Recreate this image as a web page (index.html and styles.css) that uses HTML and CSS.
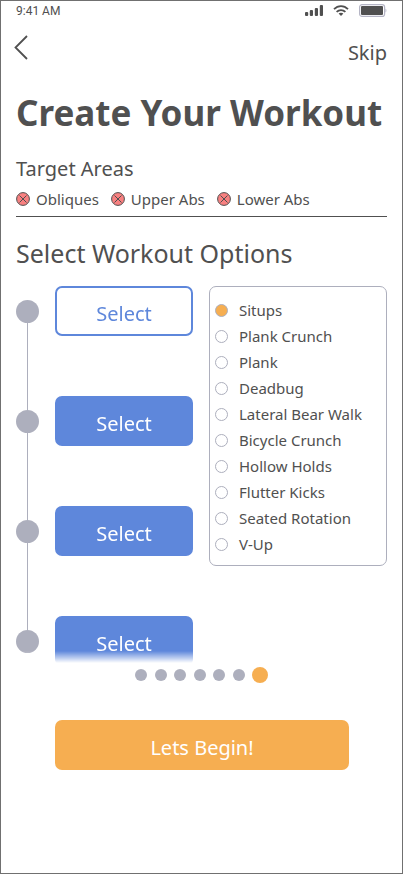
FILE: index.html
```html
<!DOCTYPE html>
<html lang="en">
<head>
    <meta charset="UTF-8">
    <meta name="viewport" content="width=device-width, initial-scale=1">
    <title>Create Your Workout</title>
    <link rel="stylesheet" href="styles.css">
</head>
<body>
    <div class="screen">
        <!-- Status bar -->
        <div class="status-bar">
            <span>9:41 AM</span>
            <div class="status-icons">
                <svg width="18" height="12" viewBox="0 0 18 12" fill="#505050">
                    <rect x="0" y="7" width="3.2" height="4" rx="1"/>
                    <rect x="4.8" y="5" width="3.2" height="6" rx="1"/>
                    <rect x="9.8" y="3" width="3.2" height="8" rx="1"/>
                    <rect x="14.8" y="0" width="3.2" height="11" rx="1"/>
                </svg>
                <svg width="16" height="12" viewBox="0 0 16 12" fill="none" stroke="#505050" stroke-width="1.8">
                    <path d="M1 4.2C5 .1 11 .1 15 4.2"/>
                    <path d="M3.6 6.9c2.5-2.4 6.3-2.4 8.8 0"/>
                    <path d="M5.6 8.6c1.4-1.2 3.4-1.2 4.8 0L8 11z" fill="#505050" stroke="none"/>
                </svg>
                <svg width="28" height="13" viewBox="0 0 28 13">
                    <rect x=".6" y=".6" width="25" height="11.8" rx="2.5" fill="none" stroke="#b5b5c5" stroke-width="1.2"/>
                    <rect x="2" y="2" width="22" height="9" rx="1" fill="#505050"/>
                    <path d="M26.5 4.5c1.2.4 1.2 3.6 0 4z" fill="#b5b5c5"/>
                </svg>
            </div>
        </div>

        <div class="top-nav">
            <button type="button" class="back" aria-label="Back">
                <svg width="14" height="25" viewBox="0 0 14 25" fill="none" stroke="#505050" stroke-width="1.8">
                    <path d="M13 1L1.5 12.5 13 24"/>
                </svg>
            </button>
            <a href="#" class="skip">Skip</a>
        </div>

        <h1>Create Your Workout</h1>

        <!-- Target areas -->
        <section class="areas">
            <h2>Target Areas</h2>
            <ul class="area-list">
                <li>
                    <button type="button" class="remove" aria-label="Remove Obliques">
                        <svg viewBox="0 0 14 14"><circle cx="7" cy="7" r="6.4"/><path d="M3.5 3.5l7 7M10.5 3.5l-7 7"/></svg>
                    </button>
                    Obliques
                </li>
                <li>
                    <button type="button" class="remove" aria-label="Remove Upper Abs">
                        <svg viewBox="0 0 14 14"><circle cx="7" cy="7" r="6.4"/><path d="M3.5 3.5l7 7M10.5 3.5l-7 7"/></svg>
                    </button>
                    Upper Abs
                </li>
                <li>
                    <button type="button" class="remove" aria-label="Remove Lower Abs">
                        <svg viewBox="0 0 14 14"><circle cx="7" cy="7" r="6.4"/><path d="M3.5 3.5l7 7M10.5 3.5l-7 7"/></svg>
                    </button>
                    Lower Abs
                </li>
            </ul>
        </section>

        <h2 class="options-title">Select Workout Options</h2>

        <div class="options">
            <div class="steps-view">
                <ol class="steps">
                    <li><span class="dot"></span><button type="button" class="select active">Select</button></li>
                    <li><span class="dot"></span><button type="button" class="select">Select</button></li>
                    <li><span class="dot"></span><button type="button" class="select">Select</button></li>
                    <li><span class="dot"></span><button type="button" class="select">Select</button></li>
                </ol>
            </div>

            <form class="exercises">
                <label><input type="radio" name="exercise" checked>Situps</label>
                <label><input type="radio" name="exercise">Plank Crunch</label>
                <label><input type="radio" name="exercise">Plank</label>
                <label><input type="radio" name="exercise">Deadbug</label>
                <label><input type="radio" name="exercise">Lateral Bear Walk</label>
                <label><input type="radio" name="exercise">Bicycle Crunch</label>
                <label><input type="radio" name="exercise">Hollow Holds</label>
                <label><input type="radio" name="exercise">Flutter Kicks</label>
                <label><input type="radio" name="exercise">Seated Rotation</label>
                <label><input type="radio" name="exercise">V-Up</label>
            </form>
        </div>

        <!-- Page indicator -->
        <div class="pager">
            <span></span><span></span><span></span><span></span><span></span><span></span><span class="current"></span>
        </div>

        <button type="button" class="begin">Lets Begin!</button>
    </div>
</body>
</html>
```
FILE: styles.css
```css
* {
    box-sizing: border-box;
}

body {
    margin: 0;
    background-color: #fff;
    color: #505050;
    font-family: "Noto Sans", "Open Sans", sans-serif;
}

h1, h2, ul, ol {
    margin: 0;
    padding: 0;
    font-weight: 400;
}

ul, ol {
    list-style: none;
}

button {
    font-family: inherit;
    border: none;
    padding: 0;
    background: none;
    cursor: pointer;
}

svg {
    display: block;
}

.screen {
    min-height: 100vh;
    padding: 0 15px;
    border: 1px solid #707070;
}

/* Status bar */
.status-bar {
    display: flex;
    justify-content: space-between;
    align-items: center;
    height: 19px;
    font-family: Roboto, sans-serif;
    font-size: 12px;
}

.status-icons {
    display: flex;
    align-items: center;
    gap: 10px;
}

.top-nav {
    display: flex;
    justify-content: space-between;
    align-items: flex-start;
    margin-left: -2px;
    padding-top: 15px;
}

.skip {
    margin-top: 4px;
    color: #505050;
    font-size: 20px;
    line-height: 28px;
    text-decoration: none;
}

h1 {
    margin-top: 21px;
    font-size: 35px;
    font-weight: 700;
    line-height: 50px;
    white-space: nowrap;
}

/* Target areas */
.areas {
    margin-top: 17px;
    padding-bottom: 6px;
    border-bottom: 1px solid #505050;
}

.areas h2 {
    font-size: 20px;
    line-height: 28px;
}

.area-list {
    display: flex;
    gap: 12px;
    margin-top: 5px;
}

.area-list li {
    display: flex;
    align-items: center;
    gap: 6px;
    font-size: 15px;
    line-height: 22px;
}

.remove svg {
    width: 14px;
    height: 14px;
    fill: #f88080;
    stroke: #505050;
}

.options-title {
    margin-top: 18px;
    font-size: 25px;
    line-height: 36px;
}

/* Steps and exercise list */
.options {
    display: flex;
    align-items: flex-start;
    justify-content: space-between;
    gap: 16px;
    margin-top: 15px;
}

.steps-view {
    flex: 1;
    height: 377px;
    overflow: hidden;
    -webkit-mask-image: linear-gradient(to top, transparent, #000 12px);
    mask-image: linear-gradient(to top, transparent, #000 12px);
}

.steps {
    display: flex;
    flex-direction: column;
    gap: 60px;
    background: linear-gradient(#adafbd, #adafbd) 11px 25px / 1px 330px no-repeat;
}

.steps li {
    display: flex;
    align-items: center;
    gap: 16px;
}

.dot {
    width: 23px;
    height: 23px;
    border-radius: 50%;
    background-color: #adafbd;
}

.select {
    flex: 1;
    height: 50px;
    padding-top: 4px;
    border: 2px solid #5e87db;
    border-radius: 7px;
    background-color: #5e87db;
    color: #fff;
    font-size: 20px;
}

.select.active {
    background-color: #fff;
    color: #5e87db;
}

.exercises {
    width: 178px;
    padding: 10px 5px 8px;
    border: 1px solid #adafbd;
    border-radius: 7px;
}

.exercises label {
    display: flex;
    align-items: center;
    gap: 11px;
    height: 26px;
    font-size: 15px;
}

.exercises input {
    appearance: none;
    width: 13px;
    height: 13px;
    margin: 0;
    border: 1px solid #adafbd;
    border-radius: 50%;
}

.exercises input:checked {
    background-color: #f6ae51;
}

.pager {
    display: flex;
    align-items: center;
    justify-content: space-between;
    width: 133px;
    margin: 4px auto 0;
}

.pager span {
    width: 12px;
    height: 12px;
    border-radius: 50%;
    background-color: #adafbd;
}

.pager .current {
    width: 16px;
    height: 16px;
    background-color: #f6ae51;
}

.begin {
    display: block;
    width: calc(100% - 77px);
    height: 50px;
    margin: 37px 38px 0 39px;
    padding-top: 4px;
    border-radius: 7px;
    background-color: #f6ae51;
    color: #fff;
    font-size: 20px;
}
```
